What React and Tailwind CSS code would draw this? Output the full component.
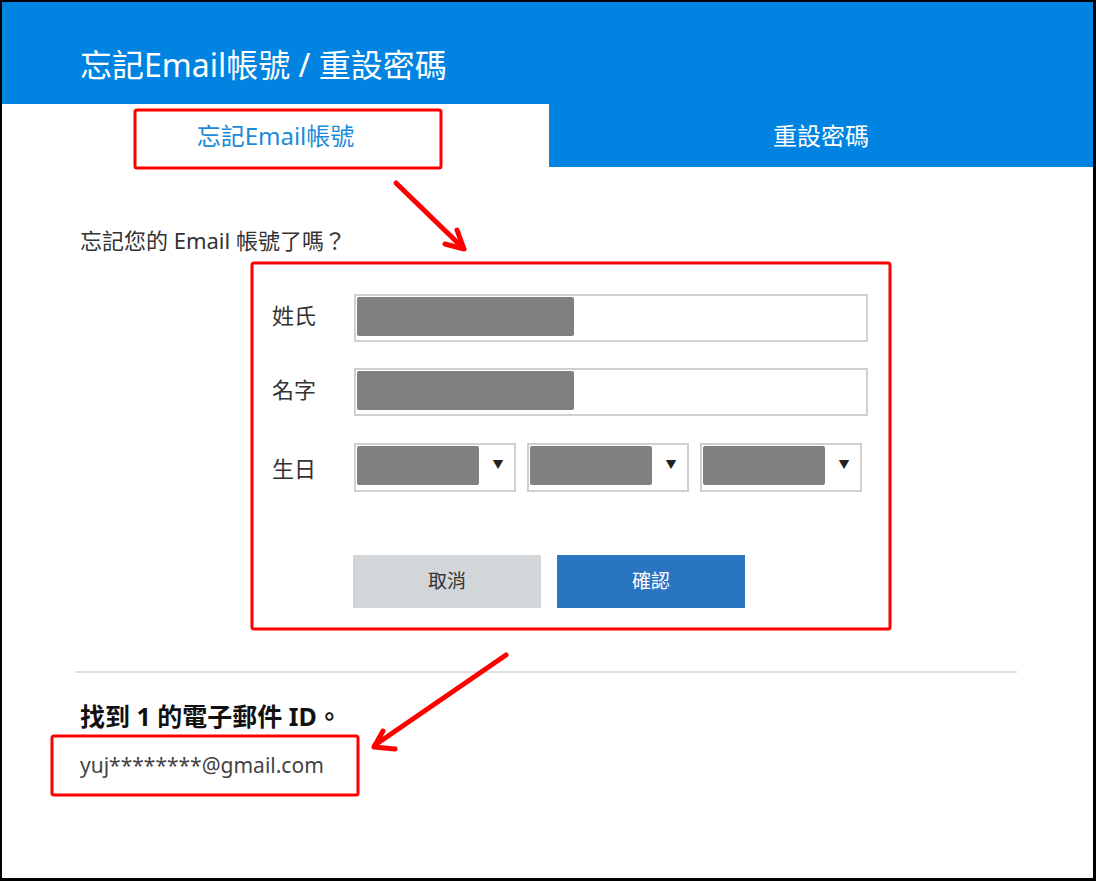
import React from "react";

function GrayBlock({ w }) {
  return <div className={`h-[39px] bg-[#808080] rounded-[2px] ${w}`} />;
}

function TextRow({ label }) {
  return (
    <div className="flex items-center">
      <div className="w-[82px] text-[22px] leading-[28px] text-[#333] -mt-[6px]">{label}</div>
      <div className="w-[514px] h-[48px] border-2 border-[#d0d0d0] p-[1px]">
        <GrayBlock w="w-[217px]" />
      </div>
    </div>
  );
}

function SelectBox() {
  return (
    <div className="w-[162px] h-[49px] border-2 border-[#d0d0d0] p-[1px] flex items-start">
      <GrayBlock w="w-[122px]" />
      <div className="flex-1 h-[39px] flex items-center justify-center pl-[4px] text-[11px] text-[#222]">▼</div>
    </div>
  );
}

function Annotations() {
  return (
    <svg
      className="absolute top-0 left-0 pointer-events-none"
      width="1091"
      height="876"
      viewBox="2 2 1091 876"
    >
      <g fill="none" stroke="#ff0000" strokeWidth="3">
        <rect x="135" y="110" width="306" height="58" rx="2" />
        <rect x="252" y="263" width="638" height="366" rx="2" />
        <rect x="52" y="736" width="306" height="59" rx="2" />
      </g>
      <g fill="none" stroke="#ff0000" strokeWidth="5" strokeLinecap="round" strokeLinejoin="round">
        <line x1="396" y1="183" x2="462" y2="247" />
        <polyline points="457,230 464,249 445,244" />
        <line x1="506" y1="655" x2="375" y2="745" />
        <polyline points="383,731 374,747 395,749" />
      </g>
    </svg>
  );
}

export default function App() {
  return (
    <div className="relative w-[1096px] h-[881px] overflow-hidden bg-white border-t-2 border-l-2 border-r-[3px] border-b-[3px] border-black font-['Noto_Sans','Noto_Sans_CJK_TC',sans-serif]">
      {/* header */}
      <div className="h-[102px] bg-[#0083e1] pl-[78px] pt-[44px]">
        <h1 className="text-[32px] leading-[38px] text-white">忘記Email帳號 / 重設密碼</h1>
      </div>

      {/* tabs */}
      <div className="flex h-[63px]">
        <div className="w-[547px] bg-white flex items-center justify-center text-[24px] text-[#1a8ad8]">
          忘記Email帳號
        </div>
        <div className="flex-1 bg-[#0083e1] flex items-center justify-center text-[24px] text-white">
          重設密碼
        </div>
      </div>

      {/* content */}
      <div className="pl-[78px] pt-[59px]">
        <p className="text-[22px] leading-[28px] text-[#333]">忘記您的 Email 帳號了嗎？</p>

        <div className="ml-[192px] mt-[40px] flex flex-col">
          <TextRow label="姓氏" />
          <div className="mt-[26px]">
            <TextRow label="名字" />
          </div>
          <div className="mt-[27px] flex items-center">
            <div className="w-[82px] text-[22px] leading-[28px] text-[#333]">生日</div>
            <div className="flex gap-[11px]">
              <SelectBox />
              <SelectBox />
              <SelectBox />
            </div>
          </div>

          <div className="mt-[63px] ml-[81px] flex gap-4">
            <button className="w-[188px] h-[53px] bg-[#d2d6d9] text-[19px] text-[#333]">取消</button>
            <button className="w-[188px] h-[53px] bg-[#2a75c2] text-[19px] text-white">確認</button>
          </div>
        </div>

        <div className="mt-[63px] -ml-[5px] w-[942px] h-[2px] bg-[#e0e0e0]" />

        <h2 className="mt-[28px] text-[25px] leading-[30px] font-bold text-[#111]">找到 1 的電子郵件 ID。</h2>
        <p className="mt-[20px] text-[21px] leading-[28px] text-[#444]">yuj********@gmail.com</p>
      </div>

      <Annotations />
    </div>
  );
}
